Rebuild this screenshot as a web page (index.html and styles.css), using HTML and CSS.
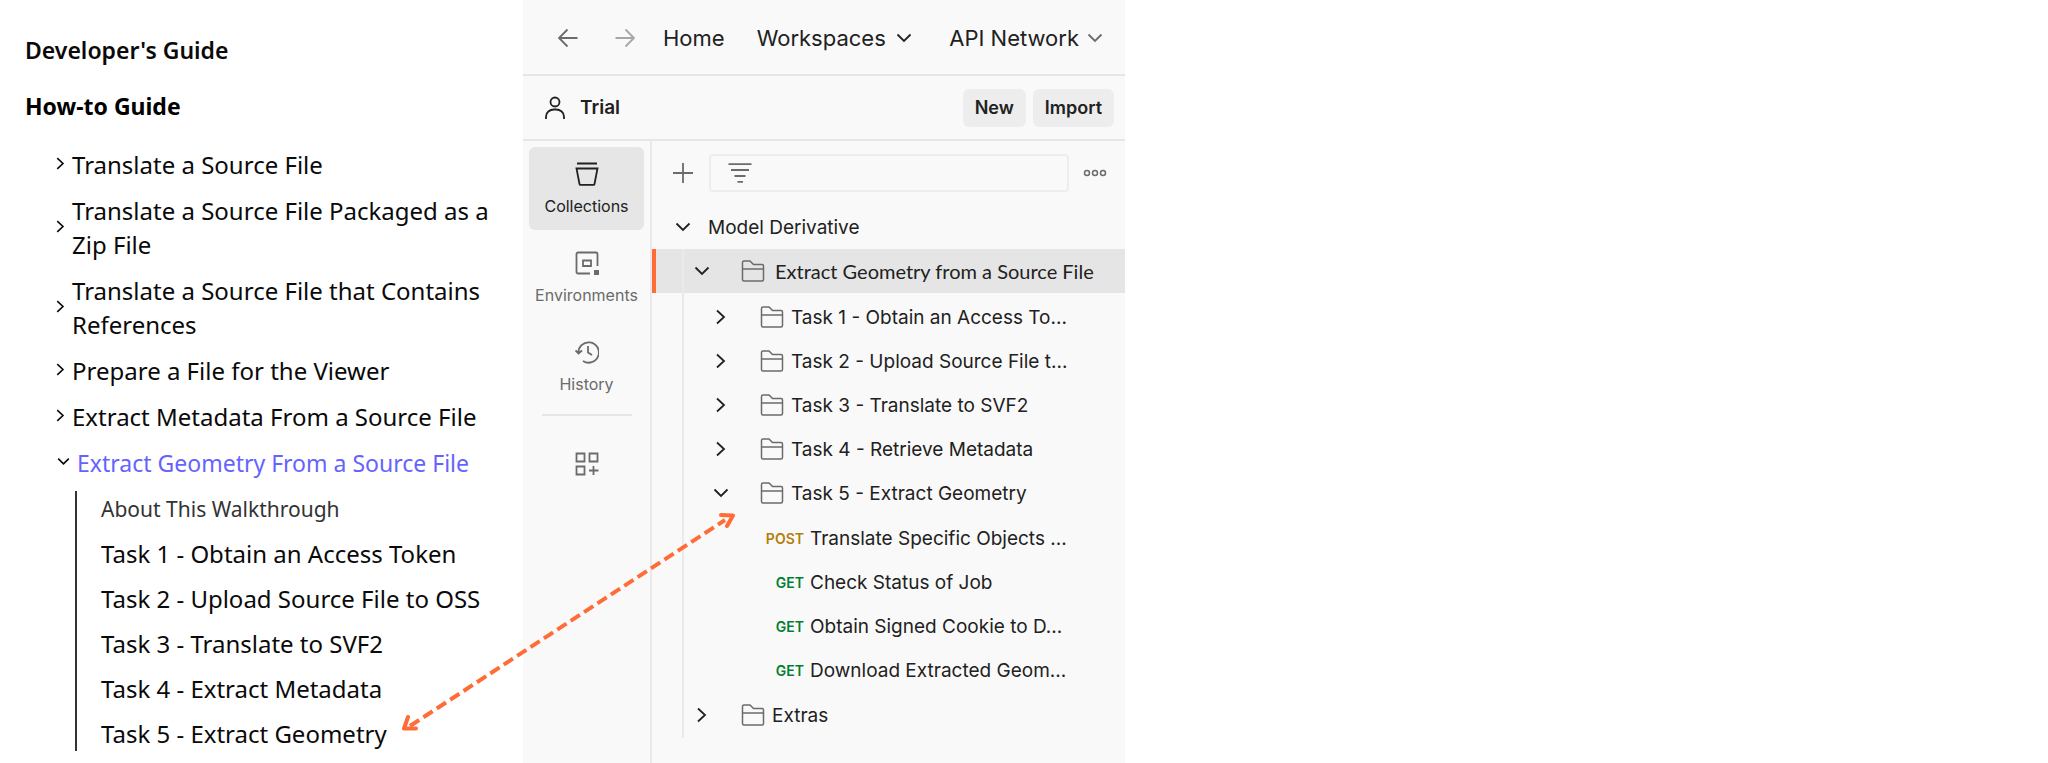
FILE: index.html
```html
<!DOCTYPE html>
<html lang="en">
<head>
<meta charset="utf-8">
<title>Developer's Guide</title>
<link rel="stylesheet" href="styles.css">
</head>
<body>
<svg class="symbols" aria-hidden="true">
  <symbol id="right" viewBox="0 0 16 16"><path d="M4 1.5 11 8l-7 6.5"/></symbol>
  <symbol id="down" viewBox="0 0 16 16"><path d="M1.5 4.5 8 11l6.500-6.500"/></symbol>
  <symbol id="folder" viewBox="0 0 24 24"><path d="M1.500 20.500V3.500a1.500 1.500 0 0 1 1.500-1.500h6l3.500 3.500h8.500a1.500 1.500 0 0 1 1.500 1.500v13.500a1.500 1.500 0 0 1-1.500 1.500H3a1.500 1.500 0 0 1-1.500-1.500zM1.500 10h21"/></symbol>
</svg>
<div class="page">
  <nav class="guide" aria-label="Developer's Guide">
    <h1 class="guide-title">Developer's Guide</h1>
    <h2 class="guide-heading">How-to Guide</h2>
    <ul class="topics">
      <li><a class="topic" href="#"><svg class="mark"><use href="#right"/></svg><span>Translate a Source File</span></a></li>
      <li><a class="topic" href="#"><svg class="mark"><use href="#right"/></svg><span>Translate a Source File Packaged as a Zip File</span></a></li>
      <li><a class="topic" href="#"><svg class="mark"><use href="#right"/></svg><span>Translate a Source File that Contains References</span></a></li>
      <li><a class="topic" href="#"><svg class="mark"><use href="#right"/></svg><span>Prepare a File for the Viewer</span></a></li>
      <li><a class="topic" href="#"><svg class="mark"><use href="#right"/></svg><span>Extract Metadata From a Source File</span></a></li>
      <li>
        <a class="topic current" href="#"><svg class="mark"><use href="#down"/></svg><span>Extract Geometry From a Source File</span></a>
        <ul class="steps">
          <li><a class="about" href="#">About This Walkthrough</a></li>
          <li><a href="#">Task 1 - Obtain an Access Token</a></li>
          <li><a href="#">Task 2 - Upload Source File to OSS</a></li>
          <li><a href="#">Task 3 - Translate to SVF2</a></li>
          <li><a href="#">Task 4 - Extract Metadata</a></li>
          <li><a href="#">Task 5 - Extract Geometry</a></li>
        </ul>
      </li>
    </ul>
  </nav>

  <main class="app">
    <header class="topbar">
      <button class="nav-arrow" aria-label="Back"><svg viewBox="0 0 20 20"><path d="M19.500 10H1M9.500 1.500 1 10l8.500 8.500"/></svg></button>
      <button class="nav-arrow forward" aria-label="Forward"><svg viewBox="0 0 20 20"><path d="M.5 10H19M10.500 1.500 19 10l-8.500 8.500"/></svg></button>
      <a class="menu home" href="#">Home</a>
      <button class="menu workspaces">Workspaces <svg><use href="#down"/></svg></button>
      <button class="menu network">API Network <svg><use href="#down"/></svg></button>
    </header>
    <div class="workspace">
      <svg class="person" viewBox="0 0 20 24"><circle cx="10" cy="6" r="4.500"/><path d="M1 23v-2.500a8 7 0 0 1 8-7h2a8 7 0 0 1 8 7V23"/></svg>
      <span class="workspace-name">Trial</span>
      <button class="action">New</button>
      <button class="action">Import</button>
    </div>
    <div class="body">
      <nav class="rail" aria-label="Sidebar">
        <button class="rail-item selected"><svg viewBox="0 0 24 24"><path d="M2 1.500h20M1.500 6.500h21l-3 15.500a1 1 0 0 1-1 .8h-13a1 1 0 0 1-1-.8z"/></svg>Collections</button>
        <button class="rail-item"><svg viewBox="0 0 24 24"><path d="M15 22.500H3A1.500 1.500 0 0 1 1.500 21V3A1.500 1.500 0 0 1 3 1.500h18A1.500 1.500 0 0 1 22.500 3v12M8 9.500h8v5.500H8z"/><path class="solid" d="M19 19h5v5h-5z"/></svg>Environments</button>
        <button class="rail-item"><svg viewBox="0 0 24 24"><path d="M3.500 13.500A10.200 10.200 0 1 1 8 21M.5 10.500l3 3 3.500-3M13 6v6.500l4 2.500"/></svg>History</button>
        <hr>
        <button class="rail-add" aria-label="Add"><svg viewBox="0 0 24 24"><path d="M1.500 1.500h8v8h-8zM14.500 1.500h8v8h-8zM1.500 14.500h8v8h-8zM18.500 14v9M14 18.500h9.500"/></svg></button>
      </nav>
      <section class="collections">
        <div class="tools">
          <button class="plus" aria-label="New collection"><svg viewBox="0 0 20 20"><path d="M10 0v20M0 10h20"/></svg></button>
          <label class="filter">
            <svg viewBox="0 0 24 20"><path d="M.5 1.200h23M3 7h18M6.500 13h11M9.500 18.800h5.500"/></svg>
            <input type="text" aria-label="Filter collections">
          </label>
          <button class="more" aria-label="More"><svg viewBox="0 0 24 8"><circle cx="4" cy="4" r="2.500"/><circle cx="12" cy="4" r="2.500"/><circle cx="20" cy="4" r="2.500"/></svg></button>
        </div>
        <ul class="tree">
          <li>
            <div class="row root"><svg class="chev"><use href="#down"/></svg><span>Model Derivative</span></div>
            <ul class="level folders">
              <li>
                <div class="row active"><svg class="chev"><use href="#down"/></svg><svg class="folder"><use href="#folder"/></svg><span>Extract Geometry from a Source File</span></div>
                <ul class="level tasks">
                  <li class="row"><svg class="chev"><use href="#right"/></svg><svg class="folder"><use href="#folder"/></svg><span>Task 1 - Obtain an Access To...</span></li>
                  <li class="row"><svg class="chev"><use href="#right"/></svg><svg class="folder"><use href="#folder"/></svg><span>Task 2 - Upload Source File t...</span></li>
                  <li class="row"><svg class="chev"><use href="#right"/></svg><svg class="folder"><use href="#folder"/></svg><span>Task 3 - Translate to SVF2</span></li>
                  <li class="row"><svg class="chev"><use href="#right"/></svg><svg class="folder"><use href="#folder"/></svg><span>Task 4 - Retrieve Metadata</span></li>
                  <li>
                    <div class="row"><svg class="chev"><use href="#down"/></svg><svg class="folder"><use href="#folder"/></svg><span>Task 5 - Extract Geometry</span></div>
                    <ul class="level requests">
                      <li class="row"><b class="verb post">POST</b><span>Translate Specific Objects ...</span></li>
                      <li class="row"><b class="verb">GET</b><span>Check Status of Job</span></li>
                      <li class="row"><b class="verb">GET</b><span>Obtain Signed Cookie to D...</span></li>
                      <li class="row"><b class="verb">GET</b><span>Download Extracted Geom...</span></li>
                    </ul>
                  </li>
                </ul>
              </li>
              <li class="row extras"><svg class="chev"><use href="#right"/></svg><svg class="folder"><use href="#folder"/></svg><span>Extras</span></li>
            </ul>
          </li>
        </ul>
      </section>
    </div>
  </main>

  <svg class="link-arrow" viewBox="0 0 340 226" aria-hidden="true">
    <path class="dashes" d="M11 217 326 11"/>
    <path d="M9 208 5 219.500 17 219.500M322 6 334 6.500 328 17"/>
  </svg>
</div>
</body>
</html>
```
FILE: styles.css
```css
* { box-sizing: border-box; }
body { margin: 0; background: #fff; }
ul { list-style: none; margin: 0; padding: 0; }
a { color: inherit; text-decoration: none; }
button { font: inherit; color: inherit; background: none; border: 0; padding: 0; }
svg { display: block; flex: none; fill: none; stroke: currentColor; stroke-width: 1.8; }
.symbols { position: absolute; width: 0; height: 0; }

.page {
  position: relative;
  display: grid;
  grid-template-columns: 523fr 602fr 923fr;
  min-height: 100vh;
}

/* Documentation menu */
.guide {
  padding: 33px 24px 12px 25px;
  font-family: "Noto Sans", sans-serif;
  font-size: 24px;
  line-height: 34px;
  color: #0a0a0a;
}
.guide-title, .guide-heading { margin: 0; font-size: 23px; }
.guide-title { font-weight: 600; }
.guide-heading { margin-top: 22px; font-weight: 700; color: #000; }
.topics { display: grid; gap: 12px; margin-top: 25px; padding-left: 29px; }
.topic { display: flex; align-items: center; gap: 5px; }
.mark { width: 13px; height: 13px; margin-bottom: 4px; stroke-width: 2; }
.current { gap: 7px; padding-left: 3px; font-size: 23px; }
.current span { color: #6563ff; }
.steps {
  display: grid;
  gap: 11px;
  margin: 11px 0 0 21px;
  padding-left: 24px;
  border-left: 2px solid #333;
}
.steps a { white-space: nowrap; }
.steps .about { font-size: 21px; color: #333; }

/* API client */
.app {
  display: flex;
  flex-direction: column;
  background: #f9f9f9;
  color: #212121;
  font-family: Inter, sans-serif;
  font-size: 19px;
}
.topbar {
  display: flex;
  align-items: center;
  height: 76px;
  padding: 1px 22px 0 35px;
  border-bottom: 2px solid #e6e6e6;
  font-size: 22px;
  white-space: nowrap;
}
.nav-arrow { color: #6b6b6b; margin-right: 37px; }
.nav-arrow svg { width: 20px; height: 20px; }
.forward { color: #a6a6a6; margin-right: 28px; }
.menu { display: flex; align-items: center; }
.menu svg { width: 16px; height: 16px; }
.home { margin-right: 32px; }
.workspaces { gap: 10px; }
.network { gap: 8px; margin-left: auto; }
.network svg { color: #6b6b6b; }
.workspace {
  display: flex;
  align-items: center;
  gap: 7px;
  height: 65px;
  padding: 0 11px 0 22px;
  border-bottom: 2px solid #e6e6e6;
  font-weight: 600;
}
.person { width: 20px; height: 24px; }
.workspace-name { margin: 0 auto 0 8px; }
.action { height: 38px; padding: 0 12px; border-radius: 6px; background: #ededed; font-size: 18px; }
.body { display: flex; flex: 1; }
.rail {
  display: flex;
  flex-direction: column;
  align-items: center;
  gap: 6px;
  width: 129px;
  padding-top: 6px;
  border-right: 2px solid #e9e9e9;
  font-size: 16px;
  color: #6b6b6b;
}
.rail svg { width: 24px; height: 24px; }
.rail-item {
  display: flex;
  flex-direction: column;
  align-items: center;
  justify-content: center;
  gap: 10px;
  width: 115px;
  height: 83px;
  border-radius: 6px;
  line-height: 20px;
}
.selected { background: #e6e6e6; color: #212121; }
.solid { fill: currentColor; stroke: none; }
.rail hr { width: 90px; margin: 0; border: 0; border-top: 2px solid #e6e6e6; }
.rail-add { margin-top: 30px; }

.collections { flex: 1; min-width: 0; }
.tools { display: flex; align-items: center; padding: 13px 18px 0 21px; color: #6b6b6b; }
.plus svg { width: 20px; height: 20px; }
.filter {
  display: flex;
  align-items: center;
  flex: 1;
  height: 38px;
  margin: 0 14px 0 16px;
  padding-left: 17px;
  border: 2px solid #ededed;
  border-radius: 4px;
}
.filter svg { width: 24px; height: 20px; }
.filter input { flex: 1; min-width: 0; border: 0; background: none; font: inherit; outline: 0; }
.more svg { width: 24px; height: 8px; stroke-width: 1.500; }

.tree { margin-top: 13px; }
.row { display: flex; align-items: center; height: 44px; white-space: nowrap; }
.chev { width: 16px; height: 16px; }
.folder { width: 24px; height: 24px; color: #6b6b6b; stroke-width: 1.500; }
.root { padding-left: 23px; gap: 17px; }
.folders { position: relative; padding-bottom: 1px; }
.folders::before {
  content: "";
  position: absolute;
  left: 30px;
  top: 0;
  bottom: 0;
  width: 2px;
  background: #eaeaea;
}
.folders > li > .row, .extras { padding-left: 42px; }
.folders .chev { margin-right: 31px; }
.folder { margin-right: 7px; }
.active { background: #e5e5e5; box-shadow: inset 4px 0 #ff6c37; font-family: Lato, sans-serif; font-size: 20px; }
.active .folder { margin-right: 10px; }
.tasks { padding-top: 2px; }
.tasks .row { padding-left: 61px; }
.requests { padding: 1px 0; }
.requests .row { padding-left: 106px; gap: 6px; }
.verb { width: 46px; text-align: right; font-size: 14px; font-weight: 600; color: #007f31; }
.post { color: #b47d0b; }

.link-arrow {
  position: absolute;
  left: 399px;
  top: 509px;
  width: 340px;
  height: 226px;
  color: #ff6c37;
  stroke-width: 4;
  stroke-linecap: round;
  stroke-linejoin: round;
}
.dashes { stroke-linecap: butt; stroke-dasharray: 11 5; }
```
